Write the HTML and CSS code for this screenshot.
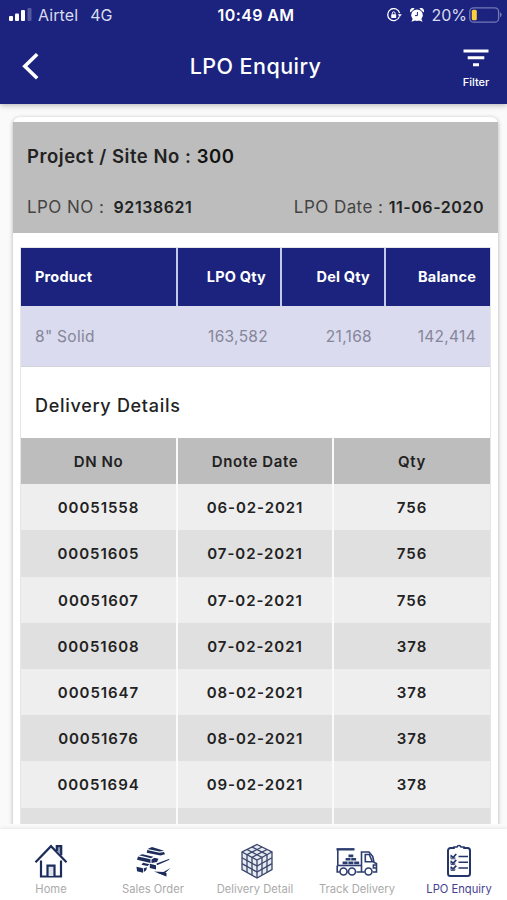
FILE: index.html
```html
<!DOCTYPE html>
<html lang="en">
<head>
  <meta charset="UTF-8">
  <meta name="viewport" content="width=device-width, initial-scale=1.0">
  <title>LPO Enquiry</title>
  <link rel="stylesheet" href="styles.css">
</head>

<body>

  <header class="header">
    <div class="status-bar">
      <div class="status-left">
        <svg class="signal" width="23" height="13" viewBox="0 0 23 13" fill="#fff">
          <rect x="0" y="8" width="4" height="5" rx="1"/>
          <rect x="6" y="5.5" width="4" height="7.5" rx="1"/>
          <rect x="12" y="2" width="4" height="11" rx="1"/>
          <rect x="18.5" y="0" width="4" height="13" rx="1" opacity=".25"/>
        </svg>
        <span class="carrier">Airtel</span>
        <span class="network">4G</span>
      </div>
      <div class="clock">10:49 AM</div>
      <div class="status-right">
        <svg width="15" height="14" viewBox="0 0 15 14" fill="none" stroke="#fff" stroke-width="1.3">
          <path d="M12.4 8.6A6 6 0 1 1 12.6 5.2"/>
          <path d="M10.8 6.2h4l-2 2.8z" fill="#fff" stroke="none"/>
          <rect x="4.2" y="6.2" width="5" height="3.8" rx=".6" fill="#fff" stroke="none"/>
          <path d="M5.3 6.5V5.2a1.4 1.4 0 0 1 2.8 0v1.3" stroke-width="1"/>
        </svg>
        <svg class="alarm" width="14" height="14" viewBox="0 0 14 14" fill="#fff">
          <circle cx="7" cy="7.2" r="5.8"/>
          <path d="M.4 4.4A3 3 0 0 1 4.6.4zM13.6 4.4A3 3 0 0 0 9.4.4zM1.4 13.8l1.5-3.2 2.2 1.8zM12.6 13.8l-1.5-3.2-2.2 1.8z"/>
          <path d="M7.4 4v3.6H5" fill="none" stroke="#1b237e" stroke-width="1"/>
        </svg>
        <span class="percent">20%</span>
        <svg class="battery" width="34" height="16" viewBox="0 0 34 16">
          <rect x=".8" y=".8" width="28.8" height="14.4" rx="3.8" fill="none" stroke="#7479b6" stroke-width="1.3"/>
          <rect x="2.8" y="2.8" width="5" height="10.4" rx="1.5" fill="#fcd03c"/>
          <path d="M31 5.3a2.7 2.7 0 0 1 0 5z" fill="#7479b6"/>
        </svg>
      </div>
    </div>
    <div class="title-bar">
      <svg class="back" width="18" height="28" viewBox="0 0 18 28" fill="none" stroke="#fff" stroke-width="3.6">
        <path d="M16.2 1.2 3.8 13.2l12.400 12"/>
      </svg>
      <h1>LPO Enquiry</h1>
      <div class="filter">
        <svg width="26" height="18" viewBox="0 0 26 18" fill="#fff">
          <path d="M.5.5h25v3H.5zM4.7 7.300h16.600v3H4.700zM10 14.200h6v3h-6z"/>
        </svg>
        <span>Filter</span>
      </div>
    </div>
  </header>

  <main class="content">
    <div class="card">
      <div class="lpo-info">
        <div class="project">Project / Site No : <b>300</b></div>
        <div class="lpo-row">
          <div class="lpo-no">LPO NO : <b>92138621</b></div>
          <div class="lpo-date">LPO Date : <b>11-06-2020</b></div>
        </div>
      </div>

      <div class="details">
        <div class="product-row product-head">
          <div>Product</div>
          <div>LPO Qty</div>
          <div>Del Qty</div>
          <div>Balance</div>
        </div>
        <div class="product-row product-data">
          <div>8" Solid</div>
          <div>163,582</div>
          <div>21,168</div>
          <div>142,414</div>
        </div>

        <h2>Delivery Details</h2>

        <div class="delivery-row delivery-head"><div>DN No</div><div>Dnote Date</div><div>Qty</div></div>
        <div class="delivery-row"><div>00051558</div><div>06-02-2021</div><div>756</div></div>
        <div class="delivery-row"><div>00051605</div><div>07-02-2021</div><div>756</div></div>
        <div class="delivery-row"><div>00051607</div><div>07-02-2021</div><div>756</div></div>
        <div class="delivery-row"><div>00051608</div><div>07-02-2021</div><div>378</div></div>
        <div class="delivery-row"><div>00051647</div><div>08-02-2021</div><div>378</div></div>
        <div class="delivery-row"><div>00051676</div><div>08-02-2021</div><div>378</div></div>
        <div class="delivery-row"><div>00051694</div><div>09-02-2021</div><div>378</div></div>
        <div class="delivery-row"><div></div><div></div><div></div></div>
      </div>
    </div>
  </main>

  <nav class="tab-bar">
    <a class="tab">
      <svg width="34" height="36" viewBox="0 0 34 36" fill="none" stroke="#1c2c5b" stroke-width="2.2">
        <path d="M1.5 19.2 17 3.200l15.500 16"/>
        <path d="M7 17.500v16h20v-16"/>
        <path d="M13.500 33V22.600h7V33" fill="#dde3ee"/>
        <path d="M22.800 8V3.200h4.400v9" fill="#8c97b3"/>
      </svg>
      <span>Home</span>
    </a>
    <a class="tab">
      <svg width="36" height="36" viewBox="0 0 36 36" fill="#1c2c5b">
        <path d="M12.5 6 17 4l12 3.800-4.500.800z"/>
        <path d="M12.200 7l12.300 2.800 4.500-.8 1 2.200-4.500 1.400-13.800-2.800z"/>
        <path d="M4 12.300l3.500-1 11 2.500-2.500 1.400z"/>
        <path d="M3 13.500l12.500 2.800V20L2 16.800z"/>
        <path d="M16.500 16.500l3-1.800 4 1-1.500 3.300-5.500 1z"/>
        <path d="M8 19.800l6.500 1.400-2 1.800-6-1.300z"/>
        <path d="M1.500 23.800l6.500 1.500v4.500l-6-1.600z"/>
        <path d="M8.800 25.300l3.200-1-.8 3-2.400 1.800z"/>
        <path d="M14.800 20.800l6.200 1.400v4.300l-6.200-1.600z"/>
        <path d="M21.500 20.500l13-4.800-.5 1.300-12 5.200z"/>
        <path d="M19 28.500l9.500.5 7-4-5 4.800.5 3.200z"/>
        <path d="M21.500 29.500l10 .5v3.600z"/>
      </svg>
      <span>Sales Order</span>
    </a>
    <a class="tab">
      <svg class="cube" width="36" height="36" viewBox="0 0 36 36" fill="none" stroke="#3a4669" stroke-width="1.3">
        <path d="M18 1.500 33 9v17.500L18 35 3 26.500V9z" fill="#e6eaf3"/>
        <path d="M3 9l15 8 15-8M18 17v18"/>
        <path d="M13 4l15 7.700v17.500M8 6.500l15 7.800V32"/>
        <path d="M23 4 8 11.700v17.500M28 6.500l-15 7.800V32"/>
        <path d="M3 14.800l15 8.200 15-8.200M3 20.600l15 8.400 15-8.400"/>
      </svg>
      <span>Delivery Detail</span>
    </a>
    <a class="tab">
      <svg width="42" height="36" viewBox="0 0 42 36" fill="none" stroke="#2b3c6e" stroke-width="1.6">
        <path d="M.5 6.300h18" stroke-width="2.400"/>
        <path d="M1.800 6v16M25.500 29V9H33l3.800 4.500 1.200 6 2.500 1v8.500H37M1.200 22.500V29h2.500M11.500 29h1M20.500 29h8"/>
        <path d="M1.200 22.500h24.300"/>
        <path d="M29.300 11.500h4l3 7.300h-7zM40 22h-2.600v3H40"/>
        <circle cx="7.500" cy="28.500" r="3.500"/>
        <circle cx="16" cy="28.500" r="3.500"/>
        <circle cx="32.500" cy="28.500" r="3.500"/>
        <path d="M12.500 11.500h4.800v2.700h-4.800zM9.600 15h4.900v2.600H9.600zM15.200 15h4.900v2.600h-4.900zM6.600 18.400h5v2.900h-5zM12.400 18.400h5v2.900h-5zM18.200 18.400h5v2.900h-5z" fill="#2b3c6e" stroke="none"/>
      </svg>
      <span>Track Delivery</span>
    </a>
    <a class="tab active">
      <svg width="28" height="36" viewBox="0 0 28 36" fill="none" stroke="#24356b" stroke-width="2">
        <path d="M9 5H5.500A2.500 2.500 0 0 0 3 7.500v23A2.500 2.500 0 0 0 5.500 33h17a2.500 2.500 0 0 0 2.500-2.500v-23A2.500 2.500 0 0 0 22.500 5H19"/>
        <path d="M9 6V4h3a2.100 2.100 0 0 1 4 0h3v2" stroke-width="1.600"/>
        <path d="M13.500 13.500H23M13.500 19.300H23M13.500 25.100H23" stroke-width="1.500"/>
        <path d="M6 12.500l2 2 3.300-3.500M6 18.300l2 2 3.300-3.500M6 24.100l2 2 3.300-3.500" stroke-width="1.700"/>
        <path d="M9.800 14v1.800H6v-4M9.800 19.800v1.800H6v-4M9.800 25.600v1.800H6v-4" stroke-width=".9"/>
      </svg>
      <span>LPO Enquiry</span>
    </a>
  </nav>

</body>
</html>
```

FILE: styles.css
```css
* {
  box-sizing: border-box;
}

body {
  margin: 0;
  height: 900px;
  display: flex;
  flex-direction: column;
  overflow: hidden;
  font-family: Inter, Roboto, sans-serif;
  background: #fafafa;
  color: #222;
}

/* header */
.header {
  flex: none;
  height: 104px;
  background: #1b237e;
  color: #fff;
  box-shadow: 0 1px 6px rgba(0, 0, 0, 0.3);
  z-index: 1;
}

.status-bar {
  display: grid;
  grid-template-columns: 1fr auto 1fr;
  align-items: center;
  height: 29px;
  padding: 0 4px 0 9px;
  font-size: 16px;
}

.status-left,
.status-right {
  display: flex;
  align-items: center;
  color: #d9dbf0;
}

.carrier {
  margin-left: 6px;
  letter-spacing: 0.1px;
}

.network {
  margin-left: 12px;
}

.clock {
  font-weight: 600;
  letter-spacing: 0.4px;
}

.status-right {
  justify-content: flex-end;
}

.status-right svg:first-child {
  margin-left: -4px;
}

.alarm {
  margin-left: 8px;
}

.percent {
  margin: 0 2px 0 7px;
}

.title-bar {
  display: grid;
  grid-template-columns: 62px 1fr 62px;
  align-items: center;
  height: 75px;
}

.back {
  margin-left: 21px;
}

h1 {
  margin: -2px 0 0 4px;
  text-align: center;
  font-size: 21.5px;
  font-weight: 550;
  letter-spacing: 0.45px;
}

.filter {
  display: flex;
  flex-direction: column;
  align-items: center;
  gap: 8px;
  padding-top: 5px;
  font-size: 11px;
  line-height: 14px;
  font-weight: 550;
}

/* lpo card */
.content {
  flex: none;
  height: 720px;
  padding: 13px 9px 0 13px;
  overflow: hidden;
}

.card {
  height: 760px;
  padding-top: 5px;
  background: #fff;
  border-radius: 7px;
  box-shadow: 0 1px 4px rgba(0, 0, 0, 0.3);
}

.lpo-info {
  height: 111px;
  padding: 22px 14px 0 14px;
  background: #bdbdbd;
}

.project {
  font-size: 18.5px;
  line-height: 24px;
  font-weight: 600;
  letter-spacing: 0.54px;
}

.project b {
  font-weight: 600;
  color: #111;
}

.lpo-row {
  display: flex;
  justify-content: space-between;
  margin-top: 27px;
  font-size: 17px;
  line-height: 24px;
  letter-spacing: 0.45px;
  color: #444;
}

.lpo-row b {
  font-size: 16px;
  font-weight: 600;
  letter-spacing: 0.55px;
  color: #222;
}

.lpo-no b {
  margin-left: 4px;
}

.details {
  margin: 15px 8px 0;
  box-shadow: 0 0 0 1px #e6e6e6;
}

.product-row {
  display: grid;
  grid-template-columns: 155px 104px 104px 1fr;
}

.product-row div {
  padding-right: 14px;
  text-align: right;
}

.product-row div:first-child {
  padding-left: 14px;
  text-align: left;
}

.product-head {
  height: 58px;
  line-height: 58px;
  background: #1b237e;
  color: #fff;
  font-size: 14.5px;
  font-weight: 700;
  letter-spacing: 0.2px;
}

.product-head div + div {
  border-left: 2px solid #c5cae9;
}

.product-data {
  height: 61px;
  line-height: 61px;
  background: #dadbee;
  border-bottom: 1px solid #d3d3da;
  color: #85869a;
  font-size: 15.5px;
  letter-spacing: 0.3px;
}

.product-data div:nth-child(2),
.product-data div:nth-child(3) {
  padding-right: 12px;
}

h2 {
  margin: 0;
  padding-left: 14px;
  height: 71px;
  line-height: 77px;
  font-size: 18px;
  font-weight: 550;
  letter-spacing: 0.7px;
}

.delivery-row {
  display: grid;
  grid-template-columns: 155px 156px 1fr;
  height: 46.2px;
  line-height: 47px;
  background: #eee;
  font-size: 15px;
  font-weight: 600;
  letter-spacing: 0.95px;
  text-align: center;
}

.delivery-row:nth-child(even) {
  background: #e0e0e0;
}

.delivery-row.delivery-head {
  background: #bdbdbd;
  letter-spacing: 0.6px;
}

.delivery-row div + div {
  border-left: 2px solid #fafafa;
}

/* bottom tabs */
.tab-bar {
  flex: 1;
  display: grid;
  grid-template-columns: repeat(5, 102px);
  margin-top: 5px;
  background: #fff;
  box-shadow: 0 -1px 3px rgba(0, 0, 0, 0.08);
}

.tab {
  display: flex;
  flex-direction: column;
  align-items: center;
  padding-top: 14px;
  color: #aaa;
  font-size: 11.2px;
  line-height: 14px;
  white-space: nowrap;
}

.tab .cube {
  margin-left: 3px;
}

.tab span {
  margin-top: 3px;
}

.tab.active {
  color: #453f8f;
}
```
